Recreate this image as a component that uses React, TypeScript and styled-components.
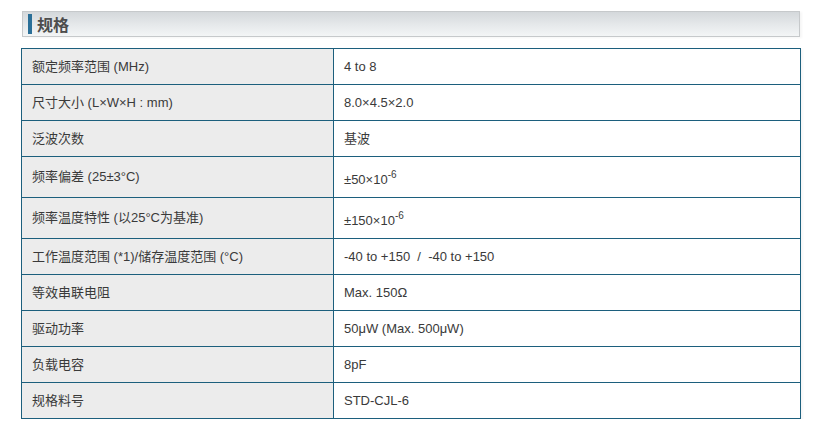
import React from "react";
import styled, { createGlobalStyle } from "styled-components";

const GlobalStyle = createGlobalStyle`
	body {
		margin: 0;
		background: #ffffff;
		font-family: "Liberation Sans", Arial, "Noto Sans CJK SC", sans-serif;
	}
`;

const Page = styled.div`
	width: 779px;
	padding: 11px 0 0 21px;
`;

const SectionHeader = styled.div`
	display: flex;
	align-items: center;
	gap: 5px;
	height: 24px;
	margin-left: 1px;
	padding-left: 5px;
	border: 1px solid #c6c9cb;
	background: linear-gradient(to bottom, #d4d8db 0%, #e6e9eb 55%, #f3f5f6 100%);
	box-shadow: 2px 1px 2px rgba(0, 0, 0, 0.04);
`;

const Accent = styled.span`
	width: 4px;
	height: 20px;
	background: #2a6f98;
`;

const Title = styled.h2`
	margin: 0;
	font-family: "Noto Sans CJK SC", sans-serif;
	font-size: 16px;
	font-weight: 700;
	line-height: 20px;
	color: #4d4d4d;
`;

const SpecTable = styled.table`
	width: 780px;
	margin-top: 11px;
	border-collapse: collapse;
	table-layout: fixed;
	font-size: 13px;
	color: #3a3a3a;
	box-shadow: 2px 1px 2px rgba(0, 0, 0, 0.04);
`;

interface RowProps {
	$tall?: boolean;
}

const Row = styled.tr<RowProps>`
	height: ${(p) => (p.$tall ? "41px" : "36px")};
`;

const Label = styled.th`
	width: 291px;
	padding: 0 10px;
	border: 1px solid #1c5f7d;
	background: #ececec;
	font-weight: 400;
	text-align: left;
	vertical-align: middle;
	line-height: 18px;
`;

const Value = styled.td<RowProps>`
	padding: ${(p) => (p.$tall ? "6px 10px 0" : "0 10px")};
	border: 1px solid #1c5f7d;
	background: #ffffff;
	vertical-align: middle;
	line-height: 18px;
	white-space: pre;
`;

const Sup = styled.sup`
	font-size: 10px;
	line-height: 0;
	position: relative;
	top: -1px;
`;

const exp = (base: string) => (
	<>
		{base}×10<Sup>-6</Sup>
	</>
);

const specs: { label: string; value: React.ReactNode; tall?: boolean }[] = [
	{ label: "额定频率范围 (MHz)", value: "4 to 8" },
	{ label: "尺寸大小 (L×W×H : mm)", value: "8.0×4.5×2.0" },
	{ label: "泛波次数", value: "基波" },
	{ label: "频率偏差 (25±3°C)", value: exp("±50"), tall: true },
	{ label: "频率温度特性 (以25°C为基准)", value: exp("±150"), tall: true },
	{
		label: "工作温度范围 (*1)/储存温度范围 (°C)",
		value: "-40 to +150  /  -40 to +150",
	},
	{ label: "等效串联电阻", value: "Max. 150Ω" },
	{ label: "驱动功率", value: "50μW (Max. 500μW)" },
	{ label: "负载电容", value: "8pF" },
	{ label: "规格料号", value: "STD-CJL-6" },
];

export default function App() {
	return (
		<Page>
			<GlobalStyle />
			<SectionHeader>
				<Accent />
				<Title>规格</Title>
			</SectionHeader>
			<SpecTable>
				<tbody>
					{specs.map((s) => (
						<Row key={s.label} $tall={s.tall}>
							<Label>{s.label}</Label>
							<Value $tall={s.tall}>{s.value}</Value>
						</Row>
					))}
				</tbody>
			</SpecTable>
		</Page>
	);
}
